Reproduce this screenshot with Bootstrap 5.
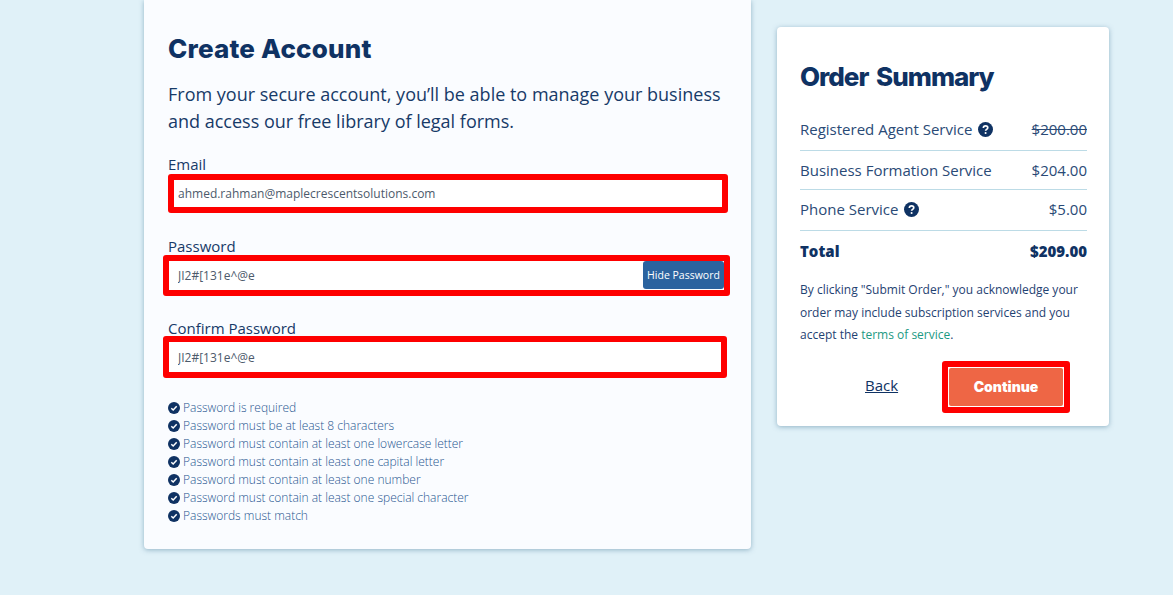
<!DOCTYPE html>
<html lang="en">
<head>
  <meta charset="UTF-8">
  <title>Create Account</title>
  <link href="https://cdn.jsdelivr.net/npm/bootstrap@5.3.0/dist/css/bootstrap.min.css" rel="stylesheet" />
  <style>
    html, body {
      height: 595px;
      overflow: hidden;
    }
    body {
      font-family: "Open Sans", sans-serif;
      background-color: #e0f1f8;
      color: #0f3263;
    }
    .page-wrap {
      padding-left: 144px;
      gap: 26px;
    }
    .form-panel {
      width: 607px;
      height: 549px;
      background-color: #fafcff;
      border-radius: 0 0 4px 4px;
      box-shadow: 0 1px 5px rgba(70, 120, 150, .5);
      padding: 33px 24px 0;
    }
    .summary-panel {
      width: 332px;
      height: 399px;
      margin-top: 27px;
      background-color: #fff;
      border-radius: 4px;
      box-shadow: 0 1px 5px rgba(70, 120, 150, .5);
      padding: 34px 22px 0 23px;
    }
    .panel-title {
      font-family: Inter, sans-serif;
      font-weight: 800;
      font-size: 26px;
      line-height: 32px;
      letter-spacing: .2px;
      color: #0f3263;
      margin: 0;
    }
    .summary-panel .panel-title {
      letter-spacing: -1px;
      word-spacing: 3px;
    }
    .intro-text {
      font-size: 18px;
      line-height: 27px;
      margin: 16px 0 20px;
      color: #173a68;
    }
    .field-label {
      font-size: 15px;
      line-height: 18px;
      margin: 0;
      color: #173a68;
    }
    .field-box {
      border: 6px solid #fe0000;
      border-radius: 3px;
      background-color: #fff;
      position: relative;
    }
    .field-box .form-control {
      border: 0;
      border-radius: 0;
      background: transparent;
      padding: 0 4px;
      height: 100%;
      font-size: 12px;
      color: #4c5a6b;
      box-shadow: none;
    }
    .box-email { width: 560px; height: 39px; margin-top: 1px; margin-bottom: 24px; }
    .box-pass { width: 567px; height: 41px; margin-left: -5px; margin-bottom: 23px; }
    .box-pass .form-control { padding-left: 9px; }
    .box-confirm { width: 564px; height: 42px; margin-left: -5px; margin-top: -1px; margin-bottom: 21px; }
    .box-confirm .form-control { padding-left: 9px; }
    .hide-btn {
      position: absolute;
      top: 0;
      right: 0;
      width: 81px;
      height: 28px;
      padding: 0;
      background-color: #2b639f;
      border: 0;
      border-radius: 3px;
      color: #fff;
      font-size: 10.5px;
      line-height: 28px;
    }
    .rule-list {
      font-size: 12px;
      font-weight: 300;
      line-height: 18px;
      color: #1f5590;
    }
    .rule-list svg {
      flex: none;
      width: 12px;
      height: 12px;
      margin-right: 3px;
    }
    .summary-rows {
      margin-top: 19px;
    }
    .summary-row {
      font-size: 15px;
      color: #2a4a76;
      border-bottom: 1px solid #bcdbe6;
    }
    .row-first { height: 39px; padding-bottom: 3px; }
    .row-mid { height: 39px; }
    .row-third { height: 41px; padding-bottom: 2px; }
    .row-total {
      border-bottom: 0;
      height: 41px;
      font-weight: 800;
      color: #0f3263;
    }
    .help-icon {
      width: 15px;
      height: 15px;
      margin-left: 6px;
    }
    .old-price {
      text-decoration: line-through;
    }
    .legal-text {
      font-size: 12px;
      line-height: 22.5px;
      margin: 7px 0 0;
      color: #1f4272;
    }
    .legal-text a {
      color: #1c9a83;
      text-decoration: none;
    }
    .action-row {
      margin-top: 14px;
    }
    .back-link {
      font-size: 15px;
      color: #0f3263;
      margin-left: 65px;
      margin-bottom: 2px;
    }
    .continue-box {
      border: 6px solid #fe0000;
      border-radius: 3px;
      background-color: #fff;
      padding: 1px;
      width: 128px;
      height: 52px;
      margin-right: 17px;
    }
    .continue-btn {
      width: 100%;
      height: 100%;
      padding: 0;
      background-color: #ee6645;
      border: 0;
      border-radius: 2px;
      color: #fff;
      font-family: Inter, sans-serif;
      font-weight: 900;
      font-size: 14px;
    }
  </style>
</head>
<body>

  <div class="page-wrap d-flex align-items-start">
    <div class="form-panel">
      <h2 class="panel-title">Create Account</h2>
      <p class="intro-text">From your secure account, you’ll be able to manage your business and access our free library of legal forms.</p>

      <form>
        <label class="field-label d-block" for="email">Email</label>
        <div class="field-box box-email">
          <input type="text" id="email" class="form-control" value="ahmed.rahman@maplecrescentsolutions.com" />
        </div>

        <label class="field-label d-block" for="password">Password</label>
        <div class="field-box box-pass">
          <input type="text" id="password" class="form-control" value="JI2#[131e^@e" />
          <button type="button" class="hide-btn">Hide Password</button>
        </div>

        <label class="field-label d-block" for="confirm">Confirm Password</label>
        <div class="field-box box-confirm">
          <input type="text" id="confirm" class="form-control" value="JI2#[131e^@e" />
        </div>
      </form>

      <div class="rule-list">
        <div class="d-flex align-items-center"><svg viewBox="0 0 16 16"><circle cx="8" cy="8" r="8" fill="#0f3263"/><path d="M4.4 8.3l2.5 2.4 4.7-4.9" fill="none" stroke="#fff" stroke-width="2"/></svg>Password is required</div>
        <div class="d-flex align-items-center"><svg viewBox="0 0 16 16"><circle cx="8" cy="8" r="8" fill="#0f3263"/><path d="M4.4 8.3l2.5 2.4 4.7-4.9" fill="none" stroke="#fff" stroke-width="2"/></svg>Password must be at least 8 characters</div>
        <div class="d-flex align-items-center"><svg viewBox="0 0 16 16"><circle cx="8" cy="8" r="8" fill="#0f3263"/><path d="M4.4 8.3l2.5 2.4 4.7-4.9" fill="none" stroke="#fff" stroke-width="2"/></svg>Password must contain at least one lowercase letter</div>
        <div class="d-flex align-items-center"><svg viewBox="0 0 16 16"><circle cx="8" cy="8" r="8" fill="#0f3263"/><path d="M4.4 8.3l2.5 2.4 4.7-4.9" fill="none" stroke="#fff" stroke-width="2"/></svg>Password must contain at least one capital letter</div>
        <div class="d-flex align-items-center"><svg viewBox="0 0 16 16"><circle cx="8" cy="8" r="8" fill="#0f3263"/><path d="M4.4 8.3l2.5 2.4 4.7-4.9" fill="none" stroke="#fff" stroke-width="2"/></svg>Password must contain at least one number</div>
        <div class="d-flex align-items-center"><svg viewBox="0 0 16 16"><circle cx="8" cy="8" r="8" fill="#0f3263"/><path d="M4.4 8.3l2.5 2.4 4.7-4.9" fill="none" stroke="#fff" stroke-width="2"/></svg>Password must contain at least one special character</div>
        <div class="d-flex align-items-center"><svg viewBox="0 0 16 16"><circle cx="8" cy="8" r="8" fill="#0f3263"/><path d="M4.4 8.3l2.5 2.4 4.7-4.9" fill="none" stroke="#fff" stroke-width="2"/></svg>Passwords must match</div>
      </div>
    </div>

    <div class="summary-panel">
      <h2 class="panel-title">Order Summary</h2>

      <div class="summary-rows">
        <div class="summary-row row-first d-flex justify-content-between align-items-center">
          <span class="d-flex align-items-center">Registered Agent Service
            <svg class="help-icon" viewBox="0 0 16 16"><circle cx="8" cy="8" r="8" fill="#0f3263"/><path d="M5.7 6.3c0-1.4 1-2.2 2.4-2.2s2.3.8 2.3 2c0 1.8-2.3 1.7-2.3 3.3" fill="none" stroke="#fff" stroke-width="1.8"/><circle cx="8.1" cy="11.8" r="1.1" fill="#fff"/></svg>
          </span>
          <span class="old-price">$200.00</span>
        </div>
        <div class="summary-row row-mid d-flex justify-content-between align-items-center">
          <span>Business Formation Service</span>
          <span>$204.00</span>
        </div>
        <div class="summary-row row-third d-flex justify-content-between align-items-center">
          <span class="d-flex align-items-center">Phone Service
            <svg class="help-icon" viewBox="0 0 16 16"><circle cx="8" cy="8" r="8" fill="#0f3263"/><path d="M5.7 6.3c0-1.4 1-2.2 2.4-2.2s2.3.8 2.3 2c0 1.8-2.3 1.7-2.3 3.3" fill="none" stroke="#fff" stroke-width="1.8"/><circle cx="8.1" cy="11.8" r="1.1" fill="#fff"/></svg>
          </span>
          <span>$5.00</span>
        </div>
        <div class="summary-row row-total d-flex justify-content-between align-items-center">
          <span>Total</span>
          <span>$209.00</span>
        </div>
      </div>

      <p class="legal-text">By clicking "Submit Order," you acknowledge your order may include subscription services and you accept the <a href="#">terms of service</a>.</p>

      <div class="action-row d-flex justify-content-between align-items-center">
        <a href="#" class="back-link">Back</a>
        <div class="continue-box">
          <button type="button" class="continue-btn">Continue</button>
        </div>
      </div>
    </div>
  </div>

</body>
</html>
